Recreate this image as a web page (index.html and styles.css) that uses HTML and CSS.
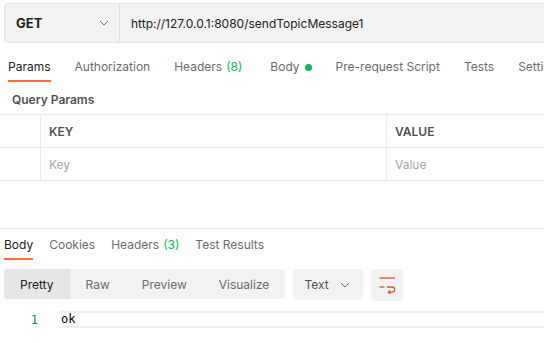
FILE: index.html
```html
<!DOCTYPE html>
<html>
<head>
<meta charset="utf-8">
<link rel="stylesheet" href="styles.css">
</head>
<body>
<div class="urlbar">
  <div class="method">
    <span class="method-name">GET</span>
    <svg class="chev" width="10" height="6" viewBox="0 0 10 6"><path d="M1 1 L5 5 L9 1" fill="none" stroke="#6b6b6b" stroke-width="1"/></svg>
  </div>
  <div class="url">http://127.0.0.1:8080/sendTopicMessage1</div>
</div>

<div class="req-tabs">
  <div class="tab active">Params</div>
  <div class="tab">Authorization</div>
  <div class="tab">Headers <span class="count">(8)</span></div>
  <div class="tab body-tab">Body <span class="dot"></span></div>
  <div class="tab">Pre-request Script</div>
  <div class="tab">Tests</div>
  <div class="tab">Settings</div>
</div>

<div class="qp-title">Query Params</div>

<div class="table">
  <div class="row head">
    <div class="cell check"></div>
    <div class="cell key">KEY</div>
    <div class="cell val">VALUE</div>
  </div>
  <div class="row">
    <div class="cell check"></div>
    <div class="cell key ph">Key</div>
    <div class="cell val ph">Value</div>
  </div>
</div>

<div class="response">
  <div class="res-tabs">
    <div class="tab active">Body</div>
    <div class="tab">Cookies</div>
    <div class="tab">Headers <span class="count">(3)</span></div>
    <div class="tab">Test Results</div>
  </div>
  <div class="toolbar">
    <div class="segmented">
      <div class="seg active">Pretty</div>
      <div class="seg">Raw</div>
      <div class="seg">Preview</div>
      <div class="seg">Visualize</div>
    </div>
    <div class="select">
      <span>Text</span>
      <svg width="10" height="6" viewBox="0 0 10 6"><path d="M1 1 L5 5 L9 1" fill="none" stroke="#6b6b6b" stroke-width="1"/></svg>
    </div>
    <div class="wrap-btn">
      <svg width="17" height="17" viewBox="0 0 17 17"><g fill="none" stroke="#e4532b" stroke-width="1.3"><path d="M0.5 1 H16"/><path d="M0.5 10 H5.5"/><path d="M8 10 H13 A2.6 2.6 0 0 1 13 15.2 H9.5"/><path d="M11.3 13.4 L9.5 15.2 L11.3 17"/></g></svg>
    </div>
  </div>
  <div class="editor">
    <div class="lineno">1</div>
    <div class="line">ok</div>
  </div>
</div>
</body>
</html>
```

FILE: styles.css
```css
* { box-sizing: border-box; }
body {
  margin: 0;
  width: 544px;
  height: 343px;
  overflow: hidden;
  font-family: Inter, "Noto Sans", sans-serif;
  font-size: 12px;
  color: #212121;
  background: #fff;
}
.urlbar {
  display: flex;
  margin: 3px 0 0 4px;
  height: 40px;
  width: 560px;
  background: #f2f2f2;
  border: 1px solid #e6e6e6;
  border-radius: 4px;
}
.method {
  width: 115px;
  display: flex;
  align-items: center;
  justify-content: space-between;
  padding: 0 10px 0 11px;
  border-right: 1px solid #e0e0e0;
}
.method-name {
  font-weight: 700;
  font-size: 13px;
  color: #212121;
}
.url {
  display: flex;
  align-items: center;
  padding-left: 11px;
  font-size: 12px;
  color: #212121;
}
.req-tabs {
  display: flex;
  gap: 24px;
  padding: 16px 0 0 8px;
  white-space: nowrap;
  overflow: hidden;
}
.tab {
  color: #6b6b6b;
  line-height: 16px;
  padding-bottom: 5px;
  border-bottom: 2px solid transparent;
  display: flex;
  align-items: center;
  font-size: 12px;
  flex-shrink: 0;
}
.tab.body-tab { margin-left: 4px; }
.tab.active {
  color: #212121;
  border-bottom-color: #ff6c37;
}
.count { color: #0cbb52; margin-left: 4px; }
.dot {
  width: 7px;
  height: 7px;
  border-radius: 50%;
  background: #0cbb52;
  margin-left: 5px;
}
.qp-title {
  padding: 10px 0 0 12px;
  line-height: 16px;
  font-weight: 600;
  color: #505050;
  font-size: 12px;
}
.table {
  margin-top: 6px;
  border-top: 1px solid #ebebeb;
}
.row {
  display: flex;
  height: 33px;
  border-bottom: 1px solid #ebebeb;
}
.cell {
  display: flex;
  align-items: center;
  padding-left: 8px;
}
.check { width: 41px; border-right: 1px solid #ebebeb; }
.key { width: 346px; border-right: 1px solid #ebebeb; }
.val { flex: 1; }
.head .cell { font-weight: 600; color: #505050; }
.ph { color: #a6a6a6; }
.response {
  margin-top: 47px;
  border-top: 1px solid #e6e6e6;
}
.res-tabs {
  display: flex;
  gap: 16px;
  padding: 8px 0 0 4px;
  white-space: nowrap;
}
.toolbar {
  display: flex;
  align-items: flex-start;
  gap: 8px;
  padding: 9px 0 0 4px;
}
.segmented {
  display: flex;
  height: 30px;
  background: #f2f2f2;
  border-radius: 4px;
  overflow: hidden;
}
.seg {
  display: flex;
  align-items: center;
  padding: 0 16px;
  color: #6b6b6b;
  font-size: 12px;
}
.seg.active { background: #e6e6e6; color: #212121; }
.select {
  width: 70px;
  height: 31px;
  background: #f2f2f2;
  border-radius: 4px;
  display: flex;
  align-items: center;
  justify-content: space-between;
  padding: 0 13px 0 11px;
  color: #505050;
  font-size: 12px;
}
.wrap-btn {
  width: 32px;
  height: 32px;
  background: #f2f2f2;
  border-radius: 4px;
  display: flex;
  align-items: center;
  justify-content: center;
  padding-top: 1px;
}
.editor {
  display: flex;
  margin-top: 10px;
}
.lineno {
  width: 60px;
  padding-right: 22px;
  text-align: right;
  color: #237893;
  font-family: "DejaVu Sans Mono", monospace;
  font-size: 12px;
  line-height: 16px;
  padding-top: 1px;
}
.line {
  flex: 1;
  border-top: 2px solid #eeeeee;
  border-bottom: 2px solid #eeeeee;
  height: 17px;
  line-height: 13px;
  padding-left: 1px;
  font-family: "DejaVu Sans Mono", monospace;
  font-size: 12px;
  color: #000;
}
```
